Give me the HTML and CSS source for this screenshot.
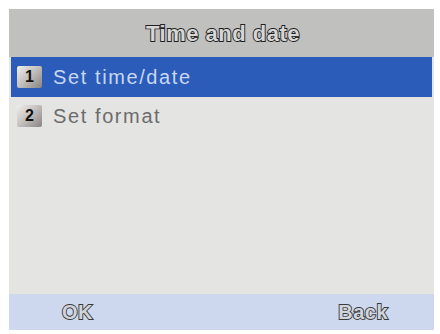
FILE: index.html
```html
<!DOCTYPE html>
<html>
<head>
<meta charset="utf-8">
<link rel="stylesheet" href="styles.css">
</head>
<body>
<div class="screen">
  <div class="header"><span class="outline title">Time and date</span></div>
  <div class="menu">
    <div class="row selected"><span class="badge">1</span><span class="label">Set time/date</span></div>
    <div class="row"><span class="badge">2</span><span class="label">Set format</span></div>
  </div>
  <div class="footer">
    <span class="outline soft ok">OK</span>
    <span class="outline soft back">Back</span>
  </div>
</div>
</body>
</html>
```

FILE: styles.css
```css
html, body {
  margin: 0;
  background: #ffffff;
}
body {
  padding: 9px 6px 4px 9px;
  font-family: "Liberation Sans", Arial, sans-serif;
}
.screen {
  width: 425px;
  height: 321px;
  background: #e4e4e2;
  display: flex;
  flex-direction: column;
}
.header {
  height: 48px;
  background: #c0c0bf;
  display: flex;
  align-items: center;
  justify-content: center;
}
.outline {
  font-weight: bold;
  color: #d6d6d6;
  -webkit-text-stroke: 1.8px #1e1e1e;
  paint-order: stroke fill;
  letter-spacing: 0.5px;
}
.title {
  font-size: 22px;
  margin-left: 3px;
  margin-top: 2px;
}
.menu {
  flex: 1;
  display: flex;
  flex-direction: column;
}
.row {
  height: 38px;
  display: flex;
  align-items: center;
  margin: 0 2px;
  padding-left: 6px;
}
.row.selected {
  height: 40px;
  background: #2b5cb9;
}
.badge {
  width: 25px;
  height: 22px;
  border-radius: 2px;
  background: linear-gradient(135deg, #f0efee 0%, #c6c3c1 45%, #878482 100%);
  color: #111;
  font-weight: bold;
  font-size: 16px;
  display: flex;
  align-items: center;
  justify-content: center;
}
.label {
  margin-left: 11px;
  font-size: 20px;
  letter-spacing: 1.6px;
  color: #6c6c6c;
}
.row.selected .label {
  color: #c8d7f1;
}
.footer {
  height: 36px;
  background: #cdd8ee;
  display: flex;
  align-items: center;
  justify-content: space-between;
  padding: 0 46px 0 53px;
}
.soft {
  font-size: 20px;
  color: #d0d4dc;
  -webkit-text-stroke: 1.8px #3a3a3a;
}
```
